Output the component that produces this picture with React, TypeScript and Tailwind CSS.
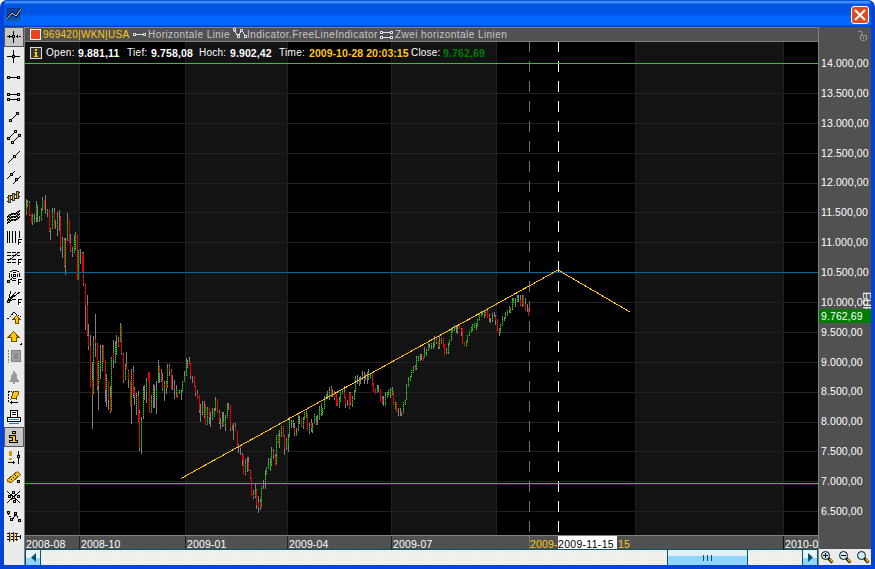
import type { ReactNode } from 'react'

type Tone = 'g' | 'r' | 'n'

// x, high, low, tone, body top, body bottom (in thirds of a pixel, body defaults to the whole range)
const autumn = `19 57 105 g 75 92|22 60 80 g 65 75|28 63 108 r 68 105|34 102 128 r|37 103 135 g 108 126|43 102 128 g 118 128|49 63 125 g 75 113|53 75 126 n|58 108 125 n|64 84 123 g 93 123|67 51 93 g 57 93|73 60 90 r|76 45 102 n|82 87 110 g 90 95|88 90 155 r 92 154|91 144 180 g 147 155|97 84 147 g 95 144|103 84 145 r 95 143|106 120 147 n|112 96 168 g 110 140|118 90 153 n|121 108 213 r 111 200|127 171 234 g 180 200|133 174 260 r 180 258|136 174 285 g 190 255|142 99 183 g 118 180|148 117 190 r|151 162 216 r 190 214|157 201 231 g 213 218|163 165 220 g 180 216|166 156 210 g 163 208|172 162 300 r|175 210 300 g|181 207 252 n|187 216 280 r 220 275|190 216 318 r 218 312|196 309 450 r 309 375|202 345 468 r 375 466|205 432 510 r 468 498|211 465 621 r 498 621|217 545 747 r 600 645|220 468 642 g 480 640|226 402 531 r 477 489|232 489 630 r 492 621|235 543 690 g 543 615|241 495 597 g 545 560|247 495 573 g 500 570|250 495 545 r|256 540 666 r 540 630|259 582 681 g 600 630|265 603 690 r 603 660|271 618 698 r 650 692|274 531 693 g 535 690|280 480 564 r 520 540|286 483 549 g 500 545|289 465 525 g 490 522|295 471 501 r 486 498|301 429 486 g 435 486|304 435 525 r 435 518|310 519 609 r 522 600|316 552 600 g 558 597|319 516 570 r 555 570|325 570 624 r 573 600|331 603 678 r|334 567 732 g 570 675|340 558 653 r 576 640|343 621 675 r 630 650|349 639 705 g 650 675|355 633 725 r 648 722|358 690 813 r 700 805|364 711 822 g 720 800|370 618 717 g 630 710|373 615 660 n|379 594 669 g 600 640|385 576 603 r|388 576 699 r|394 645 699 g 655 695|400 612 684 g 630 655|403 615 684 n|409 603 702 g 630 657|415 540 609 g 558 605|418 558 609 r 560 580|424 567 606 r 580 600|427 578 633 r 600 625|433 603 663 g 610 630|439 603 642 r 610 625|442 552 624 g 560 620|448 552 588 r 558 573|454 567 627 r 573 624|457 585 630 n|463 600 657 r 618 625|469 615 651 g 630 648|472 636 655 r|478 630 642 g`

const spring = `4 150 180 n|7 123 156 g 126 156|13 93 126 g 105 124|19 54 108 g 62 105|22 60 84 n|28 51 75 r 65 75|31 66 117 r 66 107|37 108 129 n|43 108 141 r|46 138 168 r 141 160|52 150 178 r 163 178|58 165 219 r 165 210|61 192 246 n|67 183 225 g 195 215|73 183 234 g 205 230|76 192 255 r|82 201 255 g 205 252|88 204 252 r 204 230|91 216 261 n|97 204 240 g 218 230|103 204 231 g 210 228|106 171 213 g 180 208|112 177 219 r|118 210 252 r 219 246|121 234 267 n|127 216 261 g 230 255|130 216 258 r 245 256|136 225 273 g 235 255|142 189 234 g 195 230|145 189 210 n|151 195 273 r 195 265|157 255 270 g|160 249 300 n|166 249 273 r 258 273|172 273 320 r|175 312 339 g 320 325|181 315 345 r 318 325|187 339 378 r 345 360|190 345 405 r|196 357 405 g 370 400|202 351 396 n|205 351 393 r 365 390|211 390 417 r 393 415|214 414 468 r|220 450 477 r 465 470|226 432 475 g 455 468|229 447 507 r 450 495|235 468 519 r 490 500|241 477 510 r 485 505|244 438 504 g|250 420 447 n|256 390 447 g 405 430|259 381 405 g|265 354 387 g 372 385|271 354 393 g 370 385|274 321 378 g 335 375|280 327 357 r 335 345|286 342 378 r 350 378|289 285 375 g|295 282 309 r 288 305|298 270 324 g 285 310|304 258 291 g|310 258 291 r|313 285 345 r 288 328|319 294 330 g 300 325|325 282 336 g 290 318|328 231 291 g 240 288|334 240 264 n|340 240 264 g 243 252|343 249 288 r 265 280|349 264 288 g 275 288|355 225 273 g 232 270|358 228 252 n|364 234 261 r|370 231 267 g 237 255|373 216 240 g|379 207 234 g|382 219 273 r|388 249 282 g 255 272|394 237 276 r 248 264|397 249 279 g 258 270|403 222 252 g|409 228 255 r 245 252|412 225 255 n|418 198 240 g 210 237|424 189 228 g 200 222|427 204 225 g|433 168 207 g 175 205|439 162 180 g|442 153 177 n|448 141 180 g 150 170|454 138 171 r 144 165|457 147 171 n|463 153 180 r 162 174|469 162 198 r 165 195|472 177 198 r|478 171 204 g 178 200|481 150 186 g|487 147 162 g|493 138 174 r 155 170|496 171 204 r 171 192|502 180 198 n|508 156 207 r 160 205|511 156 195 r 160 190|517 168 201 g 175 195|523 150 180 g 155 175|526 108 156 g 115 153|532 105 132 n|538 111 138 g 117 130|541 108 132 n|547 93 120 g 105 118|553 96 132 r 105 118|556 102 120 n|562 96 132 n|565 87 120 g 96 114|571 99 117 g|577 102 138 r|580 129 156 r|586 144 162 r|592 135 159 g 144 156|595 135 156 n|601 147 186 r|607 168 192 r 177 186|610 168 198 n|616 156 198 g 165 195|622 156 174 g|625 150 168 g|631 144 174 g 150 160|637 141 165 g 147 162|640 153 195 r|646 186 207 g|649 186 216 r|655 204 228 n`

const summer = `61 504 528 n|64 513 528 r 513 518|70 486 522 g|76 480 495 g|79 432 480 g 438 478|85 411 441 g 420 438|91 408 423 g|94 390 411 g|100 378 399 g 384 396|106 375 390 r 381 387|109 348 390 g 354 388|115 348 363 g|121 342 363 n|124 342 360 n|130 348 363 r|133 321 354 g 336 354|139 327 348 g 330 340|145 309 333 g 315 330|148 312 324 n|154 309 327 g 309 318|160 306 327 n|163 288 321 g 300 318|169 291 312 r 297 306|175 303 327 r 303 320|178 285 327 g 303 324|184 294 312 g|190 294 324 r|193 312 345 r|199 324 342 g 330 340|205 309 342 g 318 340|208 300 315 g|214 264 303 g 270 300|217 261 279 g|223 255 273 g 264 270|229 255 279 n|232 255 282 g 264 270|238 252 267 r|244 264 288 r 267 275|247 264 312 r|253 306 318 r|259 303 321 g|262 285 309 g|268 273 288 g|274 261 279 g|277 252 273 g|283 249 264 g|289 249 270 n|292 237 261 g|298 219 243 g|304 213 231 g|307 213 225 n|313 213 234 r 219 225|316 210 228 g|322 204 234 r 213 234|328 222 246 r 228 237|331 234 249 n|337 219 246 g 228 244|343 216 231 n|346 225 255 r 228 240|352 237 276 r|358 264 288 r 270 276|361 252 279 g|367 228 258 g 237 255|373 231 243 n|376 216 237 g 222 234|382 210 228 g|388 198 219 r 204 210|391 204 219 g|397 174 210 g 180 207|400 174 189 g|406 174 201 n|412 165 186 g 171 186|415 165 186 n|421 165 198 r 180 195|427 165 201 g 168 195|430 165 198 r|436 174 213 r 192 213|442 192 216 n|445 204 228 r|448 189 216 n`

const parse = (raw: string, left: number, top: number) =>
  raw.split('|').map((row) => {
    const [x, hi, lo, tone, open, close] = row.split(' ')
    const px = (v: string) => Math.round(+v / 3)
    return {
      x: left + Math.floor(+x / 3),
      hi: top + px(hi),
      lo: top + px(lo),
      tone: tone as Tone,
      open: top + px(open ?? hi),
      close: top + px(close ?? lo),
    }
  })

const candles = [...parse(autumn, 20, 180), ...parse(spring, 180, 340), ...parse(summer, 380, 240)]

const prices = ['14.000,00', '13.500,00', '13.000,00', '12.500,00', '12.000,00', '11.500,00', '11.000,00', '10.500,00', '10.000,00', '9.500,00', '9.000,00', '8.500,00', '8.000,00', '7.500,00', '7.000,00', '6.500,00']
const gridRows = [93, 123, 153, 183, 212, 242, 302, 332, 362, 392, 422, 451, 481, 484, 511]
const gridCols = [79, 185, 287, 391, 496, 635, 783]
const bands = [[25, 54], [185, 102], [391, 105], [635, 148]]

const Node = ({ x, y }: { x: number; y: number }) => (
  <g stroke="none">
    <rect x={x - 1} y={y - 1} width="3" height="3" fill="#000" />
    <rect x={x} y={y} width="1" height="1" fill="#ffc800" />
  </g>
)

const F = () => (
  <>
    <rect x="13" y="11" width="5" height="8" fill="#fff" stroke="none" />
    <path d="M14.500 12v6M14 12.500h4M14 15.500h3" />
  </>
)

const tools: ReactNode[] = [
  <><path d="M3 9.500h14" strokeDasharray="2 1" /><path d="M9.500 4v12M5.500 8v3M13.500 8v3" /><Node x={9} y={9} /></>,
  <><path d="M9.500 3v13M3 9.500h13" /><Node x={9} y={9} /></>,
  <><path d="M4 10.500h11" /><Node x={4} y={10} /><Node x={14} y={10} /></>,
  <><path d="M4 7.500h11M4 12.500h11" /><Node x={4} y={7} /><Node x={14} y={7} /><Node x={4} y={12} /><Node x={14} y={12} /></>,
  <><path d="M6 14l8-8" /><Node x={6} y={13} /><Node x={13} y={6} /></>,
  <><path d="M4 12l8-8M8 16l8-8" /><Node x={4} y={11} /><Node x={11} y={4} /><Node x={8} y={15} /><Node x={15} y={8} /></>,
  <><path d="M4 16L16 4" /><Node x={10} y={9} /></>,
  <><path d="M3 12l8-8M9 17l8-8" /><Node x={7} y={7} /><Node x={12} y={12} /></>,
  <><path d="M3 10.500l13-5M3 14.500l13-5" /><path d="M4.500 8.500h2v7h-2zM8.500 6.500h2v7h-2zM12.500 4.500h2v7h-2z" stroke="#333" fill="#e0b020" /></>,
  <><path d="M3 10l5-3h3l5-3M3 13l5-3h3l5-3M3 16l5-3h3l5-3" strokeWidth="2" /><path d="M5.500 8v7M9.500 7v7M13.500 5v7" stroke="#c8a030" strokeDasharray="1 2" /></>,
  <><path d="M3.500 4v12M5.500 4v12M8.500 4v12M11.500 4v12M15.500 4v7" /><F /></>,
  <><path d="M3 5.500h13M3 8.500h13M3 12.500h10M3 15.500h10" strokeDasharray="4 1" /><path d="M4 14l10-8" /><F /></>,
  <><path d="M8 3.500h5M6 4.500h2M13 4.500h2M5.500 6v5M15.500 6v4M6 12.500h2M8 13.500h4M9 5.500h3M9 11.500h3M7.500 7v3M13.500 7v3" /><path d="M9.500 7.500h2v2h-2z" /><path d="M4 15l6-6" /><F /><Node x={4} y={14} /></>,
  <><path d="M4 14L7 4M4 14l8-9M4 14L16 5M4 14l8-2" /><F /><Node x={4} y={14} /></>,
  <><path d="M3 12l3-2 4-5 3 3 4 2" strokeDasharray="2 1" /><path d="M12.500 8.500l3 3.500h-1.500v4h-3v-4h-1.500z" fill="#ffc800" stroke="#6b5200" /></>,
  <><path d="M9.500 4.500l5 5.500h-2.500v4.500h-5V10H4.500z" fill="#ffc800" stroke="#6b5200" /><path d="M18 15v3h-3z" fill="#000" stroke="none" /></>,
  <><path d="M4.500 3v13" stroke="#808080" strokeDasharray="2 1" /><path d="M7.500 3.500h9v11h-9z" fill="#a0a0a0" stroke="#808080" /><path d="M10 6l4 6M14 6l-4 6" stroke="#808080" /></>,
  <path d="M9 4h2v2l2 2v4l2 2v1H5v-1l2-2V8l2-2zM9 15h2v2H9z" fill="#999" stroke="none" />,
  <><path d="M4.500 4v12M4 4.500h4" strokeDasharray="2 1" /><path d="M8 6l3-2h3v4l-2 2v2l-2-1-3 1 1-3z" fill="#ffc800" stroke="#6b5200" /><path d="M6 15.500h8M7.500 14v3" /></>,
  <><path d="M6.500 3.500h7v7h-7zM3.500 10.500h13v4h-13z" fill="#fff" /><path d="M8 5.500h4M8 7.500h4" /><path d="M5 12.500h10M5 16.500h10" stroke="#1e86b8" /></>,
  <path d="M8.500 4.500h3v2h-3zM5.500 8.500h6v5h2v2h-8v-2h3v-3h-3z" fill="#ffc800" />,
  <><path d="M6.500 4v5M6.500 11v2" stroke="#d0a000" strokeWidth="3" /><path d="M14.500 4v13M4 15.500h7M9.500 14v3" /><Node x={14} y={9} /></>,
  <><path d="M3.500 12.500l10-8 3 3-9 8-4-1z" fill="#f0c030" stroke="#806000" /><path d="M7 12l1 1M9 10l1 1M11 8l1 1" /><Node x={14} y={14} /></>,
  <><path d="M3 4l13 12M16 4L3 16" /><Node x={9} y={5} /><Node x={5} y={9} /><Node x={9} y={10} /><Node x={14} y={9} /><Node x={10} y={14} /></>,
  <><path d="M4 6l4 7 4-6 3 6" strokeDasharray="2 1" /><Node x={4} y={5} /><Node x={7} y={12} /><Node x={11} y={6} /><Node x={15} y={13} /></>,
  <><path d="M3 6.500h11M3 12.500h11M3 9.500h13M16.500 8v4" /><path d="M5.500 5v10M9.500 5v10M12.500 6v8" stroke="#333" /><path d="M6.500 6v8M10.500 6v8" stroke="#e0b020" /></>,
]

const Toolbar = () => (
  <aside className="w-[21px] flex-none border-r border-[#808080] bg-[#ebebeb] bg-[radial-gradient(#d2d2d2_0.7px,transparent_0.7px)] bg-[length:4px_4px]">
    {tools.map((icon, i) => (
      <button
        key={i}
        type="button"
        className={i === 0 || i === 20 ? 'block h-5 w-5 bg-[#c6c6c6] outline outline-1 -outline-offset-1 outline-[#555]' : 'block h-5 w-5'}
      >
        <svg width="20" height="20" fill="none" stroke="#000" shapeRendering="crispEdges">{icon}</svg>
      </button>
    ))}
  </aside>
)

const Chart = () => (
  <svg className="block" width="793" height="493" viewBox="25 42 793 493" fill="none" shapeRendering="crispEdges">
    <rect x="25" y="42" width="793" height="493" fill="#000" />
    {bands.map(([x, w]) => <rect key={x} x={x} y="42" width={w} height="493" fill="#131313" />)}
    {gridCols.map((x) => <rect key={x} x={x} y="42" width="1" height="493" fill="#212121" />)}
    {gridRows.map((y) => <rect key={y} x="25" y={y} width="793" height="1" fill="#212121" />)}
    {candles.map((c, i) => (
      <g key={i}>
        <path d={`M${c.x + 0.5} ${c.hi}V${c.lo}`} stroke="#808080" />
        {c.tone === 'r' && <path d={`M${c.x + 0.5} ${c.open}V${c.close}`} stroke="#e60000" />}
        {c.tone === 'g' && (
          <>
            <path d={`M${c.x + 0.5} ${c.open}V${c.close}`} stroke="#0a6b08" />
            <path d={`M${c.x + 0.5} ${c.open}V${c.close}`} stroke="#1ee000" strokeDasharray="1 1" />
          </>
        )}
      </g>
    ))}
    <path d="M529.500 41V535" stroke="#707070" strokeDasharray="11 9" />
    <path d="M558.500 41V535" stroke="#fff" strokeDasharray="11 9" />
    <path d="M25 272.500H818" stroke="#0a6598" />
    <path d="M25 63.500H818M25 483.500H818" stroke="#2bcb14" />
    <path d="M181 478.500L558 270L630 312" stroke="#ffce10" />
    <path d="M181 478.500L558 270L630 312" stroke="#ff9020" strokeDasharray="1 4" />
  </svg>
)

const IndicatorBar = () => (
  <div className="flex h-[15px] items-center whitespace-nowrap border-y border-[#828282] bg-[#515151] pl-[5px] text-[10px] text-[#c8c8c8]">
    <span className="mr-[2px] h-[11px] w-[11px] border border-white bg-[#f04020]" />
    <span className="w-[90px] tracking-[0.28px] text-[#ffc814]">969420|WKN|USA</span>
    <svg className="mr-[2px]" width="13" height="10" shapeRendering="crispEdges">
      <path d="M2 4.500h9" stroke="#ddd" /><path d="M0 3h3v3H0zM10 3h3v3h-3z" fill="#ddd" /><path d="M1 4h1v1H1zM11 4h1v1h-1z" fill="#1020a0" />
    </svg>
    <span className="w-[85px] tracking-[0.44px]">Horizontale Linie</span>
    <svg className="-mt-[2px]" width="14" height="11" fill="none" shapeRendering="crispEdges">
      <path d="M1 2l4 6 4-6 3 6" stroke="#ddd" /><path d="M0 0h3v3H0zM4 7h3v3H4zM7 1h3v3H7zM11 7h3v3h-3z" fill="#ddd" /><path d="M1 1h1v1H1zM5 8h1v1H5zM8 2h1v1H8zM12 8h1v1h-1z" fill="#1020a0" />
    </svg>
    <span className="w-[133px] tracking-[0.46px]">Indicator.FreeLineIndicator</span>
    <svg className="mr-[2px]" width="13" height="10" shapeRendering="crispEdges">
      <path d="M2 2.500h9M2 7.500h9" stroke="#ddd" /><path d="M0 1h3v3H0zM10 1h3v3h-3zM0 6h3v3H0zM10 6h3v3h-3z" fill="#ddd" /><path d="M1 2h1v1H1zM11 2h1v1h-1zM1 7h1v1H1zM11 7h1v1h-1z" fill="#1020a0" />
    </svg>
    <span className="tracking-[0.43px]">Zwei horizontale Linien</span>
  </div>
)

const Quote = () => (
  <div className="absolute left-[5px] top-[5px] flex items-center whitespace-nowrap text-[10px] leading-3 text-white">
    <svg className="mr-1" width="12" height="12" shapeRendering="crispEdges">
      <path d="M.5.500h11v11H.5z" fill="#333" stroke="#ddd" /><path d="M5 2h2v2H5zM4 5h3v4h1v1H4V9h1V6H4z" fill="#ffc800" />
    </svg>
    <span className="w-8 tracking-[0.3px]">Open:</span><b className="w-[49px] text-[10.500px] tracking-[0.15px]">9.881,11</b>
    <span className="w-[24px] tracking-[0.3px]">Tief:</span><b className="w-[48px] text-[10.500px] tracking-[0.15px]">9.758,08</b>
    <span className="w-[31px] tracking-[0.2px]">Hoch:</span><b className="w-[49px] text-[10.500px] tracking-[0.1px]">9.902,42</b>
    <span className="w-[30px] tracking-[0.3px]">Time:</span><b className="w-[102px] text-[10.500px] tracking-[0.05px] text-[#ffc814]">2009-10-28 20:03:15</b>
    <span className="w-[32px] tracking-[0.2px]">Close:</span><b className="text-[10.500px] tracking-[0.15px] text-[#007c00]">9.762,69</b>
  </div>
)

const DateAxis = () => (
  <div className="flex h-[14px] items-stretch overflow-hidden whitespace-nowrap border-t border-[#828282] bg-[#515151] text-[10.500px] leading-[16px] tracking-[0.12px] text-white">
    <span className="w-[54px] flex-none pl-px">2008-08</span>
    <span className="w-[106px] flex-none border-l border-[#222] pl-px">2008-10</span>
    <span className="w-[102px] flex-none border-l border-[#222] pl-px">2009-01</span>
    <span className="w-[104px] flex-none border-l border-[#222] pl-px">2009-04</span>
    <span className="w-[138px] flex-none border-l border-[#222] pl-px">2009-07</span>
    <span className="w-[29px] flex-none overflow-hidden border-l border-[#777] text-[#ffc814]">2009-</span>
    <span className="w-[59px] flex-none bg-white tracking-[0.3px] text-black">2009-11-15</span>
    <span className="w-[166px] flex-none pl-px text-[#ffc814]">15</span>
    <span className="flex-none border-l border-[#111] pl-px">2010-04</span>
  </div>
)

const ScrollBar = () => (
  <div className="flex h-[17px] justify-between border border-[#00566a] bg-[#f1f1ed] bg-[radial-gradient(#e0e0dc_0.7px,transparent_0.7px)] bg-[length:3px_3px]">
    <button type="button" className="flex w-[15px] items-center justify-center border-r border-[#00566a] bg-linear-to-b from-[#eaf4f8] from-50% to-[#91d5ff] to-50%">
      <svg width="5" height="9"><path d="M5 0v9L0 4.500z" fill="#00566a" /></svg>
    </button>
    <div className="flex flex-1 justify-end pr-[54px]">
      <div className="flex w-[81px] items-center justify-center gap-[3px] border-x border-[#00566a] bg-linear-to-b from-[#e2f0f5] from-40% to-[#91d5ff] to-40%">
        <i className="h-[6px] w-px bg-[#00566a]" /><i className="h-[6px] w-px bg-[#00566a]" /><i className="h-[6px] w-px bg-[#00566a]" />
      </div>
    </div>
    <button type="button" className="flex w-[15px] items-center justify-center border-l border-[#00566a] bg-linear-to-b from-[#eaf4f8] from-50% to-[#91d5ff] to-50%">
      <svg width="5" height="9"><path d="M0 0v9l5-4.500z" fill="#00566a" /></svg>
    </button>
  </div>
)

const Lens = ({ sign }: { sign?: string }) => (
  <svg width="14" height="14" fill="none">
    <circle cx="5.500" cy="5.500" r="4" fill="#c8ecf8" stroke="#111" />
    {sign && <path d={sign} stroke="#000" shapeRendering="crispEdges" />}
    <path d="M8.500 8.500l4 4" stroke="#000" strokeWidth="3" /><path d="M9.500 9l3 3" stroke="#ffc014" strokeWidth="1.500" />
  </svg>
)

const PriceAxis = () => (
  <div className="relative h-[522px] bg-[#515151] pt-[21px] text-[10.500px] text-white">
    <svg className="absolute right-[3px] top-[3px]" width="11" height="11" fill="none" stroke="#999">
      <path d="M1 2l2-1 2 1v3" /><path d="M3.500 5.500h6v4l-2 1h-2l-2-1zM6.500 7v2" />
    </svg>
    {prices.map((p) => (
      <div key={p} className="flex h-[29.870px] items-center pl-[2px] leading-3 tracking-[0.1px]">{p}</div>
    ))}
    <div className="absolute right-0 top-[265px] h-[17px] w-[9px] overflow-hidden text-[10.500px] leading-[9px] [writing-mode:vertical-rl]">EUR</div>
    <div className="absolute left-0 top-[282px] flex h-[14px] w-full items-center bg-[#007c00] pl-[2px] leading-3 tracking-[0.1px]">9.762,69</div>
  </div>
)

export default function App() {
  return (
    <div className="flex h-[569px] w-[875px] flex-col overflow-hidden rounded-t-[7px] border-x-4 border-b-4 border-[#0043d8] bg-[#0043d8] font-['Liberation_Sans',Arial,sans-serif]">
      <header className="-mx-1 flex h-[27px] flex-none items-center justify-between bg-[linear-gradient(#0a50d8_0,#0a50d8_1px,#3a8fff_1px,#3a8fff_3px,#0054e3_4px,#0054e3_14px,#0066ff_17px,#0066ff_25px,#0040d0_26px)] pl-[6px] pr-[6px] pt-[3px]">
        <svg width="16" height="14" fill="none">
          <rect x="1.500" y=".5" width="12" height="12" fill="#125" fillOpacity="0.300" stroke="#103878" />
          <path d="M2 12h12" stroke="#208080" />
          <path d="M1 11l5-6 4 3 5-7" stroke="#000" strokeWidth="2.500" />
          <path d="M1 11l5-6 4 3 5-7" stroke="#e8f0f0" />
        </svg>
        <button type="button" className="flex h-[18px] w-[18px] items-center justify-center rounded-[3px] border border-white bg-[#e04a22]">
          <svg width="12" height="12" stroke="#fff" strokeWidth="2"><path d="M1 1l10 10M11 1L1 11" /></svg>
        </button>
      </header>
      <div className="flex min-h-0 flex-1">
        <Toolbar />
        <main className="relative w-[793px] flex-none">
          <IndicatorBar />
          <div className="relative">
            <Chart />
            <Quote />
          </div>
          <DateAxis />
          <ScrollBar />
        </main>
        <aside className="min-w-0 flex-1 border-l border-[#828282]">
          <PriceAxis />
          <div className="flex h-4 items-center justify-between bg-[#ebebeb] bg-[radial-gradient(#d6d6d6_0.7px,transparent_0.7px)] bg-[length:4px_4px] pl-px pr-px">
            <Lens sign="M3 5.500h5M5.500 3v5" />
            <Lens sign="M3 5.500h5" />
            <Lens />
          </div>
        </aside>
      </div>
    </div>
  )
}
